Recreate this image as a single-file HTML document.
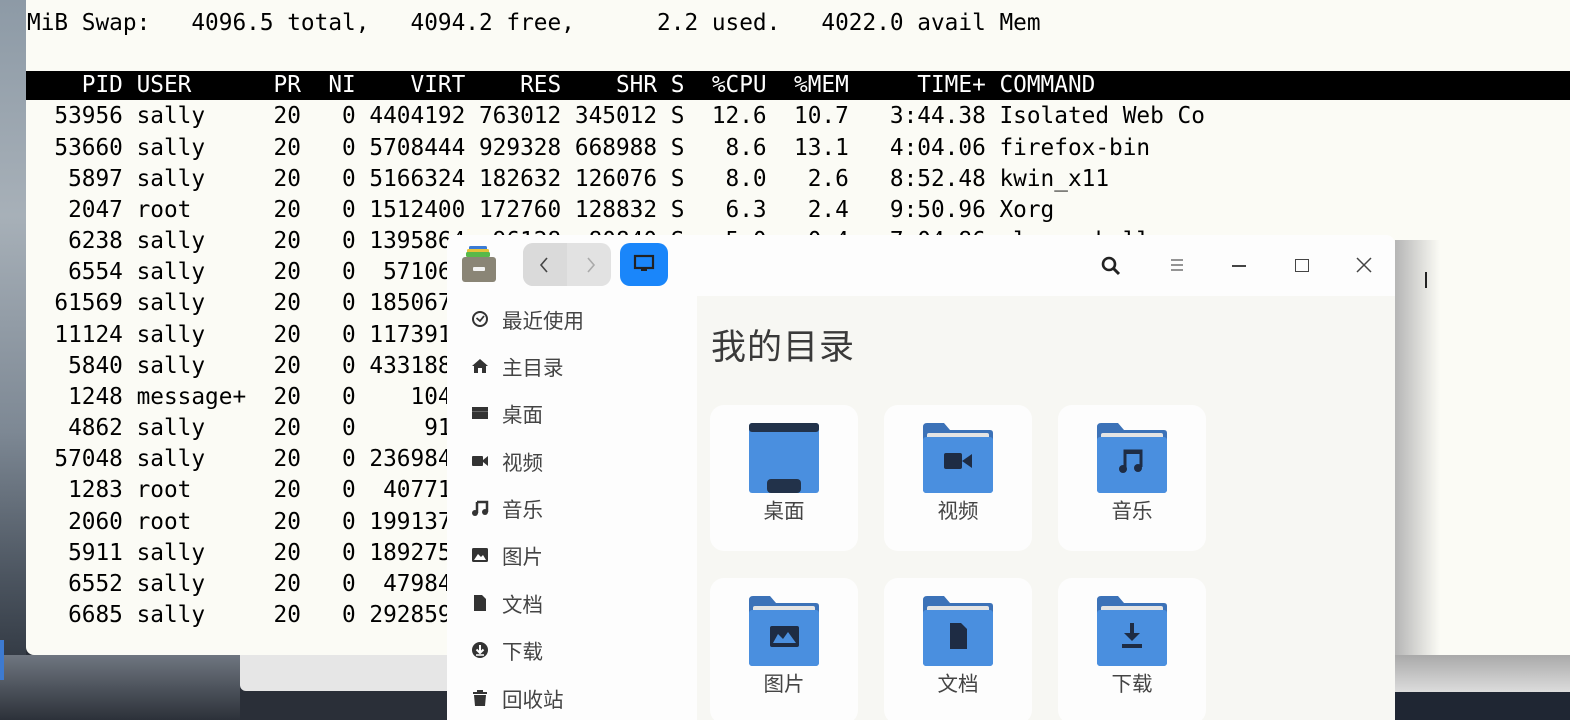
<!DOCTYPE html>
<html><head><meta charset="utf-8">
<style>
*{margin:0;padding:0;box-sizing:border-box}
body{width:1570px;height:720px;overflow:hidden;position:relative;background:#2a2f38;font-family:"Liberation Sans","Noto Sans CJK SC",sans-serif}
.abs{position:absolute}
pre{font-family:"DejaVu Sans Mono","Liberation Mono",monospace;font-size:22.75px;line-height:31.15px;color:#000;white-space:pre}
.side .it{position:absolute;left:0;height:40px;display:flex;align-items:center;font-size:20.5px;color:#444}
.side svg{position:absolute;left:24px}
.side span{position:absolute;left:55px;white-space:nowrap}
.card{position:absolute;width:148px;height:146px;background:#fdfdfd;border-radius:14px}
.card svg{position:absolute;left:38px;top:18px}
.card .lb{position:absolute;left:0;right:0;top:89px;text-align:center;font-size:20.5px;color:#444}
</style></head><body>
<div class="abs" style="left:0;top:0;width:26px;height:720px;background:linear-gradient(180deg,#8d9aa6 0%,#a7b0b8 30%,#7d8894 60%,#4c5560 80%,#222831 100%)"></div>
<div class="abs" style="left:0;top:655px;width:240px;height:65px;background:linear-gradient(180deg,#6f7680,#2c3139)"></div>
<div class="abs" style="left:0;top:640px;width:4px;height:40px;background:#3d7ad0"></div>
<div class="abs" style="left:240px;top:650px;width:207px;height:41px;background:#e6e6e6;border-radius:0 0 0 6px"></div>
<div class="abs" style="left:1395px;top:655px;width:175px;height:37px;background:linear-gradient(180deg,#a9a9a9,#dcdcdc)"></div>
<div class="abs" style="left:1395px;top:692px;width:175px;height:28px;background:#1f2633"></div>
<div class="abs" style="left:26px;top:0;width:1544px;height:655px;background:#fbfbf5;border-radius:0 0 0 8px"></div>
<div class="abs" style="left:26px;top:71px;width:1544px;height:29px;background:#000"></div>
<pre class="abs" style="left:27px;top:8px">MiB Swap:   4096.5 total,   4094.2 free,      2.2 used.   4022.0 avail Mem

<span style="color:#fff">    PID USER      PR  NI    VIRT    RES    SHR S  %CPU  %MEM     TIME+ COMMAND</span>
  53956 sally     20   0 4404192 763012 345012 S  12.6  10.7   3:44.38 Isolated Web Co
  53660 sally     20   0 5708444 929328 668988 S   8.6  13.1   4:04.06 firefox-bin
   5897 sally     20   0 5166324 182632 126076 S   8.0   2.6   8:52.48 kwin_x11
   2047 root      20   0 1512400 172760 128832 S   6.3   2.4   9:50.96 Xorg
   6238 sally     20   0 1395864  96128  80840 S   5.0   0.4   7:04.86 plasmashell
   6554 sally     20   0  571064
  61569 sally     20   0 1850672
  11124 sally     20   0 1173916
   5840 sally     20   0 4331884
   1248 message+  20   0    104080
   4862 sally     20   0     91080
  57048 sally     20   0 2369840
   1283 root      20   0  407712
   2060 root      20   0 1991376
   5911 sally     20   0 1892752
   6552 sally     20   0  479848
   6685 sally     20   0 2928592</pre>
<div class="abs" style="left:1395px;top:240px;width:45px;height:415px;background:linear-gradient(90deg,#b5b5b5,#fbfbf5)"></div>
<div class="abs" style="left:1425px;top:272px;width:2px;height:16px;background:#222"></div>
<div class="abs" style="left:447px;top:235px;width:948px;height:485px;background:#fdfdfd;border-radius:9px 9px 0 0;overflow:hidden">
  <div class="abs" style="left:250px;top:61px;width:698px;height:424px;background:#f7f7f3"></div>
  <svg class="abs" style="left:14px;top:8px" width="38" height="40" viewBox="0 0 38 40">
    <rect x="8" y="3" width="18" height="5" rx="1.5" fill="#3a7bd5"/>
    <rect x="6" y="6" width="22" height="5" rx="1.5" fill="#e5c33a"/>
    <rect x="5" y="9" width="24" height="5" rx="1.5" fill="#58b94a"/>
    <rect x="1" y="14" width="34" height="25" rx="3" fill="#8a8576"/>
    <rect x="12" y="24" width="12" height="4" rx="1" fill="#f3f3f3"/>
  </svg>
  <div class="abs" style="left:76px;top:8px;width:88px;height:43px;background:#e2e2e2;border-radius:10px"></div>
  <div class="abs" style="left:76px;top:8px;width:44px;height:43px;background:#dadada;border-radius:10px 0 0 10px"></div>
  <svg class="abs" style="left:90px;top:20px" width="16" height="20"><path d="M10 3 L4 10 L10 17" stroke="#444" stroke-width="1.6" fill="none"/></svg>
  <svg class="abs" style="left:136px;top:20px" width="16" height="20"><path d="M5 3 L11 10 L5 17" stroke="#aaa" stroke-width="1.6" fill="none"/></svg>
  <div class="abs" style="left:173px;top:8px;width:48px;height:43px;background:#1a86fa;border-radius:10px"></div>
  <svg class="abs" style="left:186px;top:19px" width="22" height="20"><rect x="2" y="2" width="18" height="12" fill="none" stroke="#222" stroke-width="2.2"/><rect x="8" y="14" width="6" height="3" fill="#222"/></svg>
  <svg class="abs" style="left:653px;top:20px" width="22" height="22"><circle cx="9" cy="9" r="6" fill="none" stroke="#222" stroke-width="2.6"/><path d="M13 13 L19 19" stroke="#222" stroke-width="3"/></svg>
  <svg class="abs" style="left:722px;top:22px" width="16" height="16"><path d="M2 3H14M2 8H14M2 13H14" stroke="#555" stroke-width="1.2"/></svg>
  <div class="abs" style="left:785px;top:30px;width:14px;height:1.5px;background:#444"></div>
  <div class="abs" style="left:848px;top:24px;width:14px;height:13px;border:1.5px solid #444"></div>
  <svg class="abs" style="left:908px;top:21px" width="18" height="18"><path d="M2 2L16 16M16 2L2 16" stroke="#444" stroke-width="1.5"/></svg>
  <div class="side">
    <div class="it" style="top:64px"><svg width="18" height="18"><circle cx="9" cy="9" r="7" fill="none" stroke="#333" stroke-width="2"/><path d="M5.5 8L9 11L13 6" stroke="#333" stroke-width="1.8" fill="none"/></svg><span>最近使用</span></div>
    <div class="it" style="top:111px"><svg width="18" height="18"><path d="M9 2L1 9H3V16H7V11H11V16H15V9H17Z" fill="#333"/></svg><span>主目录</span></div>
    <div class="it" style="top:158px"><svg width="18" height="18"><rect x="1" y="3" width="16" height="4" fill="#333"/><rect x="1" y="8" width="16" height="7" fill="#333"/><rect x="1" y="7" width="16" height="1" fill="#666"/></svg><span>桌面</span></div>
    <div class="it" style="top:206px"><svg width="18" height="18"><rect x="1" y="4" width="11" height="10" rx="1" fill="#333"/><path d="M12 8L17 4V14L12 10Z" fill="#333"/></svg><span>视频</span></div>
    <div class="it" style="top:253px"><svg width="18" height="18"><path d="M6 3H16V13" stroke="#333" stroke-width="2.5" fill="none"/><path d="M6 3V14" stroke="#333" stroke-width="2.5"/><circle cx="4" cy="14" r="3" fill="#333"/><circle cx="14" cy="13" r="3" fill="#333"/></svg><span>音乐</span></div>
    <div class="it" style="top:300px"><svg width="18" height="18"><rect x="1" y="2" width="16" height="14" rx="1.5" fill="#333"/><path d="M3 14L7 8L10 11L12 9L15 14Z" fill="#fff"/></svg><span>图片</span></div>
    <div class="it" style="top:348px"><svg width="18" height="18"><path d="M3 1H11L15 5V17H3Z" fill="#333"/></svg><span>文档</span></div>
    <div class="it" style="top:395px"><svg width="18" height="18"><circle cx="9" cy="9" r="8" fill="#333"/><path d="M9 4V11M5.5 8.5L9 12L12.5 8.5" stroke="#fff" stroke-width="2" fill="none"/><path d="M5 14H13" stroke="#fff" stroke-width="1.5"/></svg><span>下载</span></div>
    <div class="it" style="top:443px"><svg width="18" height="18"><rect x="2" y="3" width="14" height="2" fill="#333"/><rect x="6" y="1" width="6" height="2" fill="#333"/><path d="M3 6H15L14 17H4Z" fill="#333"/></svg><span>回收站</span></div>
  </div>
  <div class="abs" style="left:264px;top:84px;font-size:35px;color:#3a3a3a;letter-spacing:1px">我的目录</div>
  <div class="card" style="left:263px;top:170px">
    <svg width="72" height="72" viewBox="0 0 72 72"><rect x="1" y="0" width="70" height="70" rx="3" fill="#4a8fdf"/><rect x="1" y="0" width="70" height="9" rx="3" fill="#22324a"/><rect x="19" y="56" width="34" height="14" rx="4" fill="#22324a"/></svg>
    <div class="lb">桌面</div></div>
  <div class="card" style="left:437px;top:170px">
    <svg width="72" height="72" viewBox="0 0 72 72"><path d="M1 4Q1 0 5 0H22L28 7H68Q71 7 71 10V66Q71 70 67 70H5Q1 70 1 66Z" fill="#3c72b8"/><rect x="5" y="10" width="62" height="8" rx="2" fill="#e4e4e4"/><rect x="1" y="14" width="70" height="56" rx="3" fill="#4a8fdf"/><rect x="22" y="30" width="18" height="16" rx="2" fill="#1e2c44"/><path d="M40 38L50 31V45Z" fill="#1e2c44"/></svg>
    <div class="lb">视频</div></div>
  <div class="card" style="left:611px;top:170px">
    <svg width="72" height="72" viewBox="0 0 72 72"><path d="M1 4Q1 0 5 0H22L28 7H68Q71 7 71 10V66Q71 70 67 70H5Q1 70 1 66Z" fill="#3c72b8"/><rect x="5" y="10" width="62" height="8" rx="2" fill="#e4e4e4"/><rect x="1" y="14" width="70" height="56" rx="3" fill="#4a8fdf"/><path d="M29 46V28H45V44" stroke="#1e2c44" stroke-width="3" fill="none"/><rect x="29" y="27" width="16" height="4" fill="#1e2c44"/><circle cx="27" cy="46" r="4" fill="#1e2c44"/><circle cx="42" cy="45" r="4" fill="#1e2c44"/></svg>
    <div class="lb">音乐</div></div>
  <div class="card" style="left:263px;top:343px">
    <svg width="72" height="72" viewBox="0 0 72 72"><path d="M1 4Q1 0 5 0H22L28 7H68Q71 7 71 10V66Q71 70 67 70H5Q1 70 1 66Z" fill="#3c72b8"/><rect x="5" y="10" width="62" height="8" rx="2" fill="#e4e4e4"/><rect x="1" y="14" width="70" height="56" rx="3" fill="#4a8fdf"/><rect x="22" y="30" width="29" height="21" rx="2" fill="#1e2c44"/><path d="M25 47L30 38L35 43L40 36L48 47Z" fill="#4a8fdf"/></svg>
    <div class="lb">图片</div></div>
  <div class="card" style="left:437px;top:343px">
    <svg width="72" height="72" viewBox="0 0 72 72"><path d="M1 4Q1 0 5 0H22L28 7H68Q71 7 71 10V66Q71 70 67 70H5Q1 70 1 66Z" fill="#3c72b8"/><rect x="5" y="10" width="62" height="8" rx="2" fill="#e4e4e4"/><rect x="1" y="14" width="70" height="56" rx="3" fill="#4a8fdf"/><path d="M28 27H39L45 33V53H28Z" fill="#1e2c44"/></svg>
    <div class="lb">文档</div></div>
  <div class="card" style="left:611px;top:343px">
    <svg width="72" height="72" viewBox="0 0 72 72"><path d="M1 4Q1 0 5 0H22L28 7H68Q71 7 71 10V66Q71 70 67 70H5Q1 70 1 66Z" fill="#3c72b8"/><rect x="5" y="10" width="62" height="8" rx="2" fill="#e4e4e4"/><rect x="1" y="14" width="70" height="56" rx="3" fill="#4a8fdf"/><path d="M36 27V42" stroke="#1e2c44" stroke-width="4"/><path d="M28 37L36 45L44 37Z" fill="#1e2c44"/><rect x="26" y="48" width="20" height="4" fill="#1e2c44"/></svg>
    <div class="lb">下载</div></div>
</div>
</body></html>
